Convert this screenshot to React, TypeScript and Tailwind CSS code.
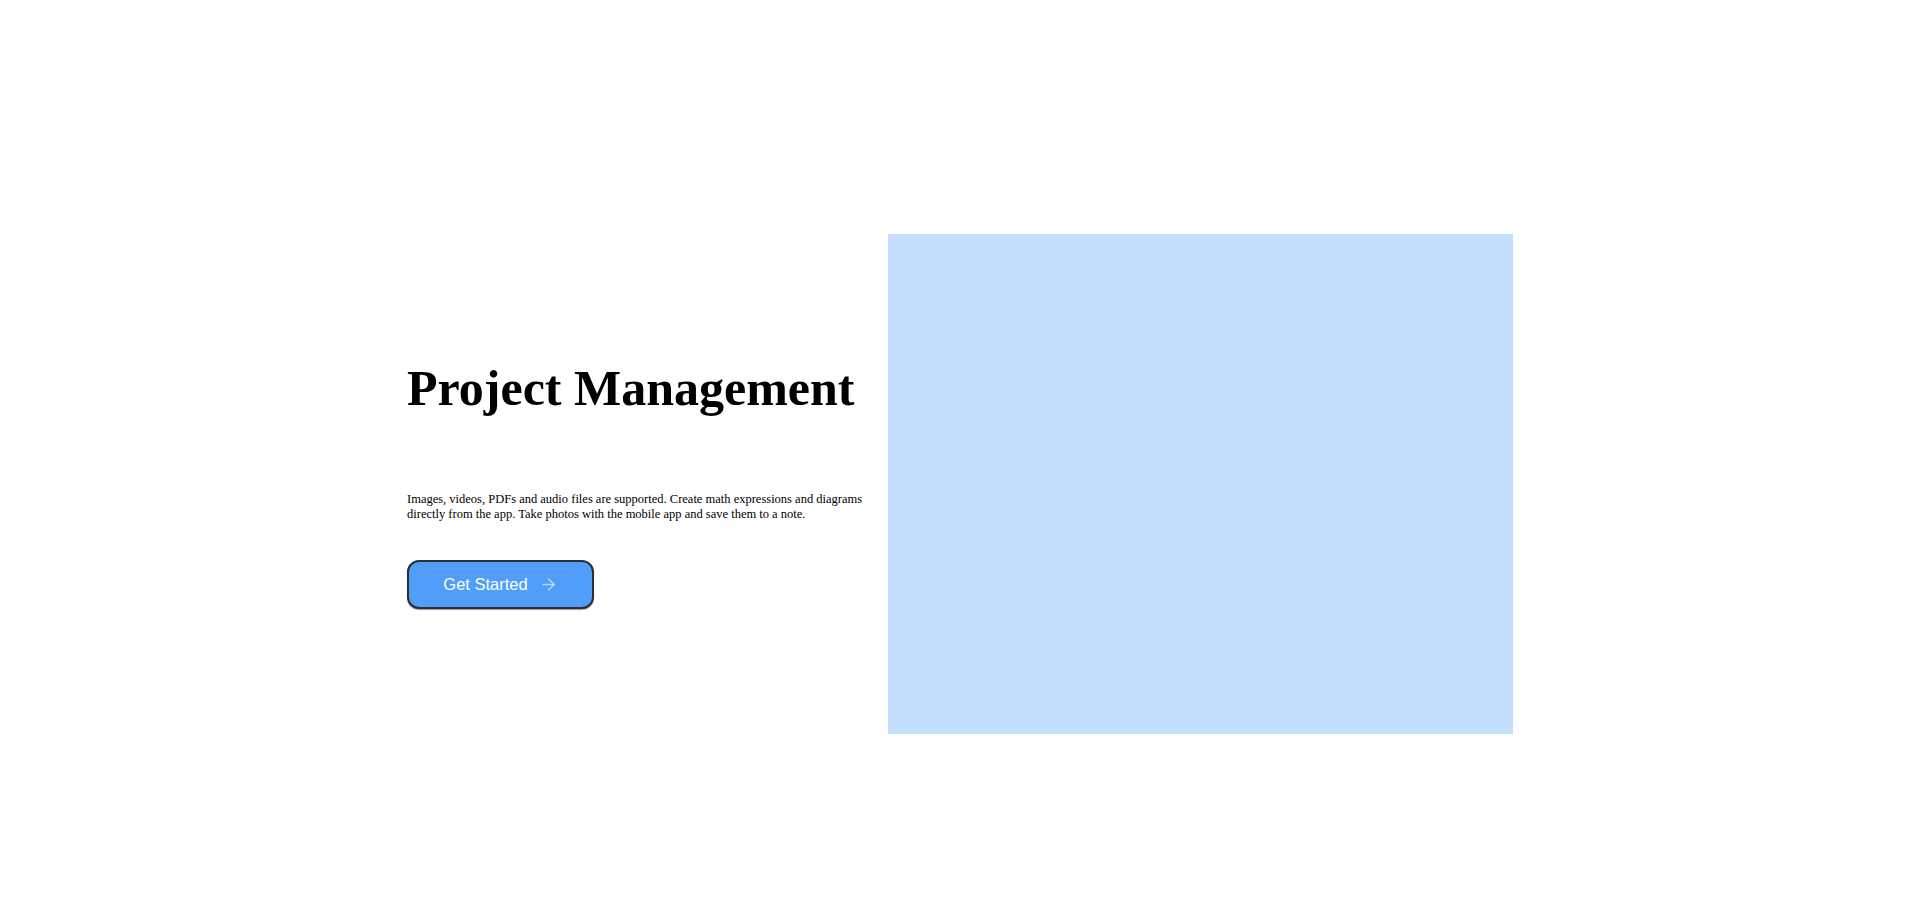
import { ArrowRight } from 'lucide-react'

export default function App() {
  return (
    <div className="min-h-screen bg-white text-black">
      <div className="flex justify-center pl-[2px] pt-[234px] pb-[167px]">
        <div className="flex gap-[2px]">
          {/* Copy */}
          <div className="w-[479px] pt-[124px]">
            <h1 className="font-['Liberation_Serif',serif] text-[50px] font-bold leading-[60px]">
              Project Management
            </h1>
            <p className="mt-[73.5px] font-['Liberation_Serif',serif] text-[12.5px] leading-[15px]">
              Images, videos, PDFs and audio files are supported. Create math expressions and diagrams directly from
              the app. Take photos with the mobile app and save them to a note.
            </p>
            <button className="mt-[38.4px] flex h-[49px] w-[187px] items-center justify-center gap-[11px] rounded-xl border-2 border-[#2a2f38] bg-[#519dfa] font-['Liberation_Sans',sans-serif] text-[16.5px] text-white shadow-[0_1px_1px_rgba(0,0,0,0.4)]">
              Get Started
              <ArrowRight size={19} strokeWidth={1.6} className="text-white/60" />
            </button>
          </div>

          {/* Picture */}
          <div className="h-[500px] w-[625px] bg-[#c3dffd]" />
        </div>
      </div>
    </div>
  )
}
